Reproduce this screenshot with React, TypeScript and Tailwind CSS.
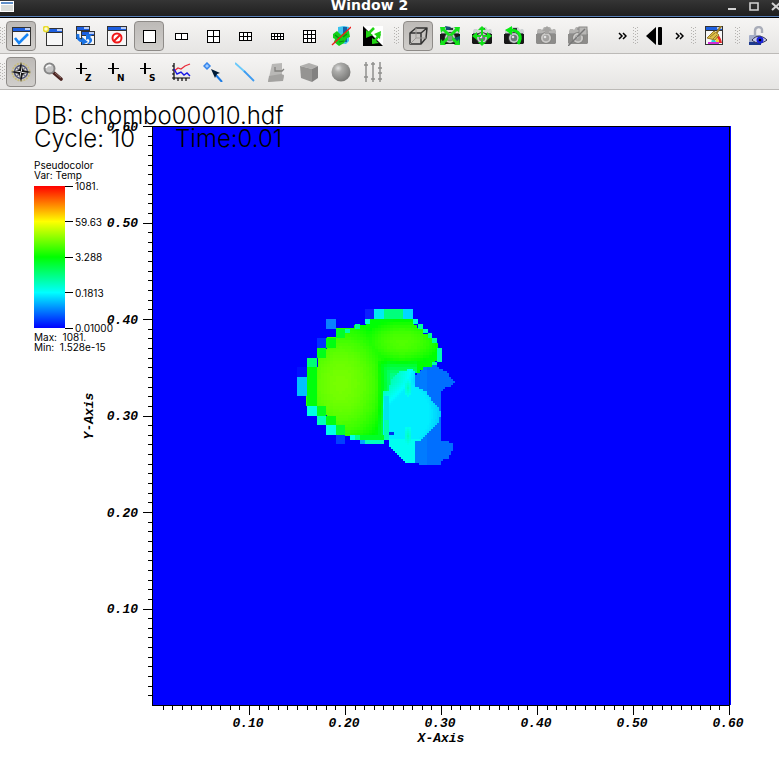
import React from "react";

type Point = [number, number];
type IconProps = { children: React.ReactNode };

const Glyph = ({ children }: IconProps) => (
  <svg viewBox="0 0 20 20" className="h-5 w-5" aria-hidden="true">
    {children}
  </svg>
);

const MiniWindow = ({ x = 0, y = 0, w = 18, h = 19 }) => (
  <g shapeRendering="crispEdges">
    <rect x={x} y={y} width={w} height={h} fill="#333" />
    <rect x={x + 1} y={y + 1} width={w - 2} height={3} fill="#1d5fe0" />
    <rect x={x + w - 6} y={y + 1} width={5} height={2} fill="#b9cdf5" />
    <rect x={x + 1} y={y + 5} width={w - 2} height={h - 6} fill="#f7f7f7" />
  </g>
);

const ActiveWindowIcon = () => (
  <Glyph>
    <MiniWindow x={1} y={1} w={19} h={19} />
    <path d="M4 12 L8 17 L17 8" fill="none" stroke="#1684f5" strokeWidth="2.6" />
  </Glyph>
);

const NewWindowIcon = () => (
  <Glyph>
    <MiniWindow x={3} y={2} w={17} h={18} />
    <circle cx="3" cy="3" r="2.6" fill="#fffbd0" stroke="#e8dc30" strokeWidth="1.6" />
  </Glyph>
);

const CloneWindowIcon = () => (
  <Glyph>
    <MiniWindow x={1} y={0} w={14} h={13} />
    <MiniWindow x={6} y={5} w={14} h={14} />
    <path d="M3 8 C2 12 4 15 8 15" fill="none" stroke="#1b74e4" strokeWidth="3" />
    <path d="M7 11l6 5-6 3z" fill="#1b74e4" />
    <path d="M14 18c4-2 4-5 1-7l2-2-6-1 0 6 2-1c2 1 2 3-1 5z" fill="#1b74e4" />
  </Glyph>
);

const DeleteWindowIcon = () => (
  <Glyph>
    <MiniWindow x={0} y={0} w={20} h={20} />
    <circle cx="10" cy="12" r="4.5" fill="#fff" stroke="#f01818" strokeWidth="2" />
    <path d="M7 15l6-6" stroke="#f01818" strokeWidth="2" />
  </Glyph>
);

type LayoutProps = { cols: number; rows: number; cell: number };

// Window layout glyph: a black lattice of cols x rows cells
const LayoutIcon = ({ cols, rows, cell }: LayoutProps) => {
  const w = cols * cell + 1;
  const h = rows * cell + 1;
  const x = Math.ceil((20 - w) / 2);
  const y = Math.round((20 - h) / 2);
  return (
    <Glyph>
      <g shapeRendering="crispEdges">
        <rect x={x} y={y} width={w} height={h} fill="#000" />
        {Array.from({ length: cols * rows }, (_, i) => (
          <rect
            key={i}
            x={x + 1 + (i % cols) * cell}
            y={y + 1 + Math.floor(i / cols) * cell}
            width={cell - 1}
            height={cell - 1}
            fill="#fff"
          />
        ))}
      </g>
    </Glyph>
  );
};

const ClearPlotsIcon = () => (
  <Glyph>
    <path d="M7 1l6-1 5 1v14l-3 3-8-1z" fill="#3cc4ee" />
    <path d="M12 1l4 0v15l-4 0z" fill="#1261a8" />
    <path d="M2 8l4-3 4 4 4-3 4-1 1 6-3 1-3 5-5 3-5-4 1-3-2-1z" fill="#12cf17" />
    <path d="M4 9l5 4M12 11l4-3M8 16l5-1" stroke="#0a8d10" strokeWidth="1.2" />
    <path d="M1 19L20 1" stroke="#ed1c1c" strokeWidth="1.4" />
  </Glyph>
);

const InvertIcon = () => (
  <Glyph>
    <rect width="20" height="20" fill="#fff" />
    <path d="M0 0L20 20H0z" fill="#000" />
    <path d="M11 2L5 8M10 17l7-9" stroke="#21d413" strokeWidth="2.6" />
    <path d="M3 4v8l7-3zM18 5l-7 3 6 5zM9 12v6l7-1z" fill="#21d413" />
  </Glyph>
);

const BoxIcon = () => (
  <Glyph>
    <g fill="none" stroke="#333" strokeWidth="1.5" strokeLinejoin="round">
      <path d="M2 7h11v11H2zM2 7l6-5h11l-6 5M19 2l-1 10-5 6" />
      <path d="M8 2v10h10M8 12l-6 6" stroke="#9b9996" strokeWidth="1" />
    </g>
  </Glyph>
);

type CameraProps = { children?: React.ReactNode; muted?: boolean };

const Camera = ({ children, muted = false }: CameraProps) => {
  const body = muted ? "#8d8c8a" : "#171717";
  const top = muted ? "#b5b4b2" : "#cdd2d3";
  return (
    <Glyph>
      <path d="M1 5l1-2h3l1 1 2-3h6l2 3 1-1h2l1 2v4H1z" fill={top} />
      <path d="M0 8h20v9l-1 1H1l-1-1z" fill={body} />
      <rect x="1" y="7" width="18" height="1" fill={muted ? "#999" : "#5e6668"} />
      <rect x="9" y="2" width="4" height="2" fill={muted ? "#999" : "#30383c"} />
      <circle cx="10" cy="12" r="6" fill={muted ? "#858482" : "#333"} />
      <circle cx="10" cy="12" r="5" fill={muted ? "#cccbc9" : "#c2c8ca"} />
      <circle cx="10" cy="12" r="3.2" fill={muted ? "#a3a2a0" : "#6e7779"} />
      <circle cx="9" cy="11" r="1.3" fill="#e2e2e2" />
      {children}
    </Glyph>
  );
};

const ResetViewIcon = () => (
  <Camera>
    <path d="M5 0l6 1-2 3-3 0z" fill="#164b78" />
    <path d="M14 12l6-2v8l-4 1z" fill="#0f5963" />
    <path d="M2 2l16 16M18 2L2 18" stroke="#14e31a" strokeWidth="3" />
    <path d="M0 1h6L1 7zM20 1h-6l5 6zM0 19h6l-5-6zM20 19h-6l5-6z" fill="#14e31a" />
    <circle cx="10" cy="12" r="2.4" fill="#7d9a82" />
  </Camera>
);

const RecenterViewIcon = () => (
  <Camera>
    <path
      d="M10 0l4 4h-3v5H9V4H6zM10 20l4-4h-3v-3H9v3H6zM0 10l5-4v3h4v2H5v3zM20 10l-5-4v3h-4v2h4v3z"
      fill="#12e018"
    />
  </Camera>
);

const UndoViewIcon = () => (
  <Camera>
    <path d="M6 4c9 0 13 6 8 14" fill="none" stroke="#08ec12" strokeWidth="3" />
    <path d="M1 4l7-4v9z" fill="#08ec12" />
  </Camera>
);

const SaveViewIcon = () => (
  <Camera muted>
    <path d="M6 5l5-5 5 5h-3v3H9V5z" fill="#a4a3a1" />
  </Camera>
);

const ChooseCenterIcon = () => (
  <Camera muted>
    <rect x="11" y="1" width="8" height="8" fill="#b8b7b5" stroke="#8a8987" />
    <path d="M0 20L17 3" stroke="#777" strokeWidth="1.4" />
  </Camera>
);

const StepBackIcon = () => (
  <Glyph>
    <path d="M1 10L11 1v18z" fill="#000" />
    <rect x="13" y="1" width="4" height="18" rx="1" fill="#000" />
  </Glyph>
);

const SweepIcon = () => (
  <Glyph>
    <MiniWindow x={1} y={0} w={18} h={19} />
    <path d="M9 8c5-1 8 3 9 9h-3c0-4-2-6-6-6z" fill="#e5292b" />
    <path d="M9 11c4 0 6 2 6 6h-3c0-3-1-4-3-4z" fill="#f3d42c" />
    <path d="M8 13c3 0 4 2 4 4H7z" fill="#25d8da" />
    <rect x="4" y="16" width="11" height="2" fill="#d02cd7" />
    <path d="M17 0l-5 8" stroke="#9b7b24" strokeWidth="2" />
    <path d="M10 5l5 4-4 5-8-2z" fill="#ddbf45" stroke="#98792b" />
    <path d="M6 11l5-4M9 13l4-4" stroke="#98792b" />
  </Glyph>
);

const LockIcon = () => (
  <Glyph>
    <path d="M7 9V5c0-5 7-5 7-1v3" fill="none" stroke="#a9adb9" strokeWidth="2.4" />
    <rect x="1" y="9" width="12" height="10" rx="1" fill="#a3acc8" />
    <path d="M1 16h12v3H1z" fill="#1d3a8e" />
    <path d="M4 14c4-5 10-5 15 0-5 4-11 4-15 0z" fill="#c9cdf0" stroke="#33334e" />
    <circle cx="12" cy="14" r="3.5" fill="#1c24dc" />
    <circle cx="12" cy="14" r="1.3" fill="#000" />
  </Glyph>
);

const NavigateIcon = () => (
  <Glyph>
    <circle cx="10" cy="10" r="8.6" fill="none" stroke="#c8bc7c" strokeWidth="1.8" strokeDasharray="2 1" />
    <circle cx="10" cy="10" r="6.5" fill="#e6e5e1" stroke="#4a4f70" strokeWidth="1.4" />
    <path d="M5 5l5 3 5-3-3 5 3 5-5-3-5 3 3-5z" fill="#6d6d7c" />
    <path d="M10 0l2 8 8 2-8 2-2 8-2-8-8-2 8-2z" fill="#161616" />
    <path d="M10 10V3l1 6zM10 10h7l-6 1zM10 10v7l-1-6zM10 10H3l6-1z" fill="#fff" />
  </Glyph>
);

const ZoomIcon = () => (
  <Glyph>
    <path d="M11 11l7 6" stroke="#4b2522" strokeWidth="3.6" strokeLinecap="round" />
    <path d="M12 11l6 5" stroke="#8f6b65" strokeWidth="1" />
    <circle cx="6.5" cy="6.5" r="5" fill="#c5c5c5" stroke="#858585" strokeWidth="2" />
    <path d="M3 6c1-3 4-3 5-2" fill="none" stroke="#f8f8f8" strokeWidth="1.6" />
  </Glyph>
);

const PickIcon = ({ letter }: { letter: string }) => (
  <Glyph>
    <path d="M5 1h2v11H5zM1 6h11v1H1z" fill="#000" shapeRendering="crispEdges" />
    <text x="10" y="19" className="font-['DejaVu_Sans'] text-[9px] font-bold">
      {letter}
    </text>
  </Glyph>
);

const LineoutIcon = () => (
  <Glyph>
    <path d="M3 1v17M1 16h18M1 4h2M1 8h2M1 12h2M7 16v3M11 16v3M15 16v3" stroke="#000" strokeWidth="1.2" />
    <path d="M3 9l4-3 3 1 4-3 5-2" fill="none" stroke="#e92b39" strokeWidth="1.3" />
    <path d="M3 7l3 5 4-2 3 3 3-2 3 3" fill="none" stroke="#1517e5" strokeWidth="1.4" />
  </Glyph>
);

const PointToolIcon = () => (
  <Glyph>
    <path d="M4 1l3 3-3 3-3-3z" fill="#9fcbff" stroke="#3585eb" strokeWidth="1.5" />
    <path d="M12 12l7 8" stroke="#1b7be5" strokeWidth="2" />
    <path d="M8 7l9 4-3 1-2 4z" fill="#001a35" />
  </Glyph>
);

const LineToolIcon = () => (
  <Glyph>
    <path d="M0 1L10 10" stroke="#69c9fb" strokeWidth="1.8" />
    <path d="M9 9L19 19" stroke="#3d9bf0" strokeWidth="1.8" />
  </Glyph>
);

const PlaneToolIcon = () => (
  <Glyph>
    <path d="M5 2l10-1v12l2 1-1 4-15 2 2-9z" fill="#b9b8b6" />
    <path d="M2 14l12-2 3 1-1 6-15 1z" fill="#a3a2a0" />
    <path d="M8 5v4h7l2-2" fill="none" stroke="#81807e" strokeWidth="1.3" />
  </Glyph>
);

const BoxToolIcon = () => (
  <Glyph>
    <path d="M1 4l9-3 9 3-6 3z" fill="#b0afad" />
    <path d="M1 4l12 3v13L2 16z" fill="#959492" />
    <path d="M13 7l6-3v12l-6 4z" fill="#828180" />
  </Glyph>
);

const SphereToolIcon = () => (
  <Glyph>
    <defs>
      <radialGradient id="sphere" cx="0.35" cy="0.3" r="0.7">
        <stop offset="0" stopColor="#e1e1e1" />
        <stop offset="0.3" stopColor="#acacaa" />
        <stop offset="1" stopColor="#7b7b79" />
      </radialGradient>
    </defs>
    <circle cx="10" cy="10" r="9.5" fill="url(#sphere)" />
  </Glyph>
);

const AxisToolIcon = () => (
  <Glyph>
    <path d="M3 0v20M10 0v20M17 0v20M1 3h4M1 15h4M8 2h4M8 17h4M15 6h4M15 11h4M15 17h4" stroke="#90908e" strokeWidth="1.5" />
  </Glyph>
);

type Tool = { name: string; icon: React.ReactNode; pressed?: boolean; disabled?: boolean };

const windowTools: Tool[] = [
  { name: "Set active window", icon: <ActiveWindowIcon />, pressed: true },
  { name: "New window", icon: <NewWindowIcon /> },
  { name: "Clone window", icon: <CloneWindowIcon /> },
  { name: "Delete window", icon: <DeleteWindowIcon /> },
  { name: "Layout 1x1", icon: <LayoutIcon cols={1} rows={1} cell={12} />, pressed: true },
  { name: "Layout 1x2", icon: <LayoutIcon cols={2} rows={1} cell={6} /> },
  { name: "Layout 2x2", icon: <LayoutIcon cols={2} rows={2} cell={6} /> },
  { name: "Layout 2x3", icon: <LayoutIcon cols={3} rows={2} cell={4} /> },
  { name: "Layout 2x4", icon: <LayoutIcon cols={4} rows={2} cell={3} /> },
  { name: "Layout 3x3", icon: <LayoutIcon cols={3} rows={3} cell={4} /> },
  { name: "Clear plots", icon: <ClearPlotsIcon /> },
  { name: "Invert background", icon: <InvertIcon /> },
];

const viewTools: Tool[] = [
  { name: "Perspective", icon: <BoxIcon />, pressed: true },
  { name: "Reset view", icon: <ResetViewIcon /> },
  { name: "Recenter view", icon: <RecenterViewIcon /> },
  { name: "Undo view", icon: <UndoViewIcon /> },
  { name: "Save view", icon: <SaveViewIcon />, disabled: true },
  { name: "Choose center", icon: <ChooseCenterIcon />, disabled: true },
];

const modeTools: Tool[] = [
  { name: "Navigate", icon: <NavigateIcon />, pressed: true },
  { name: "Zoom", icon: <ZoomIcon /> },
  { name: "Zone pick", icon: <PickIcon letter="Z" /> },
  { name: "Node pick", icon: <PickIcon letter="N" /> },
  { name: "Spreadsheet pick", icon: <PickIcon letter="S" /> },
  { name: "Lineout", icon: <LineoutIcon /> },
  { name: "Point tool", icon: <PointToolIcon /> },
  { name: "Line tool", icon: <LineToolIcon /> },
  { name: "Plane tool", icon: <PlaneToolIcon />, disabled: true },
  { name: "Box tool", icon: <BoxToolIcon />, disabled: true },
  { name: "Sphere tool", icon: <SphereToolIcon />, disabled: true },
  { name: "Axis restriction tool", icon: <AxisToolIcon />, disabled: true },
];

const animationTools: Tool[] = [{ name: "Previous frame", icon: <StepBackIcon /> }];
const clearTools: Tool[] = [{ name: "Clear window", icon: <SweepIcon /> }];
const lockTools: Tool[] = [{ name: "Lock view", icon: <LockIcon /> }];

const ToolGroup = ({ tools }: { tools: Tool[] }) => (
  <div className="flex shrink-0 gap-0.5">
    {tools.map((tool) => (
      <button
        key={tool.name}
        type="button"
        aria-label={tool.name}
        disabled={tool.disabled}
        className={
          tool.pressed
            ? "flex h-[30px] w-[30px] items-center justify-center rounded border border-[#8e8b88] bg-gradient-to-b from-[#bdbab7] to-[#d0cecb]"
            : "flex h-[30px] w-[30px] items-center justify-center rounded border border-transparent"
        }
      >
        {tool.icon}
      </button>
    ))}
  </div>
);

const Grip = () => (
  <svg viewBox="0 0 5 18" className="h-[18px] w-[5px] shrink-0" shapeRendering="crispEdges" aria-hidden="true">
    {[0, 3, 6, 9, 12, 15].map((y) => (
      <g key={y} fill="#b5b3b0">
        <rect x="0" y={y} width="1" height="1" />
        <rect x="2" y={y + 1} width="1" height="1" />
        <rect x="4" y={y} width="1" height="1" />
      </g>
    ))}
  </svg>
);

const MoreButton = () => (
  <button type="button" aria-label="More tools" className="flex h-[30px] w-[18px] shrink-0 items-center justify-center">
    <svg viewBox="0 0 9 8" className="h-2 w-[9px]" aria-hidden="true">
      <path d="M1 1l3 3-3 3M5 1l3 3-3 3" fill="none" stroke="#000" strokeWidth="1.5" />
    </svg>
  </button>
);

const TitleBar = () => (
  <header className="flex h-[18px] items-start justify-between overflow-hidden border-b border-black bg-gradient-to-b from-[#353535] to-[#1e1e1e] shadow-[inset_0_-1px_0_#5a80b8]">
    <svg viewBox="0 0 74 12" className="h-3 w-[74px]" shapeRendering="crispEdges" aria-hidden="true">
      <rect x="0" y="1" width="14" height="11" fill="#fff" />
      <rect x="1" y="2" width="12" height="2" fill="#5f8fc9" />
      <rect x="1" y="5" width="12" height="6" fill="#d9dcd9" />
    </svg>
    <h1 className="pr-14 font-['DejaVu_Sans'] text-sm leading-[11px] font-bold text-white">Window 2</h1>
    <div className="-mr-2 flex shrink-0 text-[#d2d2d2]">
      <button type="button" aria-label="Minimize" className="flex h-3 w-[22px] items-center justify-center">
        <svg viewBox="0 0 10 10" className="h-2.5 w-2.5" fill="none" stroke="currentColor" strokeWidth="2">
          <path d="M1 8h8" />
        </svg>
      </button>
      <button type="button" aria-label="Maximize" className="flex h-3 w-[22px] items-center justify-center">
        <svg viewBox="0 0 10 10" className="h-2.5 w-2.5" fill="none" stroke="currentColor" strokeWidth="1.6">
          <path d="M1 2h8v7H1z" />
        </svg>
      </button>
      <button type="button" aria-label="Close" className="flex h-3 w-[22px] items-center justify-center">
        <svg viewBox="0 0 10 10" className="h-2.5 w-2.5" fill="none" stroke="currentColor" strokeWidth="2">
          <path d="M1 2l8 7M9 2l-8 7" />
        </svg>
      </button>
    </div>
  </header>
);

function inside(poly: Point[], x: number, y: number) {
  let hit = false;
  for (let i = 0, j = poly.length - 1; i < poly.length; j = i++) {
    const [xi, yi] = poly[i];
    const [xj, yj] = poly[j];
    if (yi > y !== yj > y && x < ((xj - xi) * (y - yi)) / (yj - yi) + xi) hit = !hit;
  }
  return hit;
}

// Distance from a core, 0 in the middle and 1 on the rim
const reach = (x: number, y: number, cx: number, cy: number, rx: number, ry: number) =>
  Math.hypot((x - cx) / rx, (y - cy) / ry);

const hotHue = (x: number, y: number) => {
  const left = 92 + 20 * reach(x, y, 341, 384, 42, 56) ** 2;
  const cap = 101 + 16 * reach(x, y, 402, 342, 36, 20) ** 2;
  const rim = x < 416 ? 2 * Math.max(0, Math.min(x - 376, y - 360)) : 0;
  return Math.min(left, cap, 121) + rim;
};

const coldHue = (x: number, y: number) => {
  const spots = Math.min(reach(x, y, 408, 388, 4, 9), reach(x, y, 408, 436, 4, 10));
  if (spots < 1) return 164 + 14 * spots;
  if (y > 438) return 177;
  const corner = Math.min(28, Math.max(0, 795 - x - y));
  return 184 - corner + 30 * Math.max(0, reach(x, y, 399, 414, 40, 42) - 0.75);
};

const lobeHue = (x: number) => (x < 428 ? 211 : 214);

const hotArea: Point[] = [
  [374, 319], [413, 319], [413, 324], [418, 324], [418, 329], [423, 329], [423, 333], [428, 333],
  [428, 338], [432, 338], [432, 343], [437, 343], [437, 362], [432, 366], [424, 368], [417, 374],
  [402, 376], [391, 385], [386, 395], [384, 440], [360, 440], [360, 435], [345, 435], [336, 435],
  [336, 425], [326, 425], [326, 416], [317, 416], [317, 406], [307, 406], [307, 367], [317, 367],
  [317, 348], [326, 348], [326, 338], [336, 338], [336, 329], [355, 329], [355, 324], [365, 324],
  [365, 319],
];

const coldArea: Point[] = [
  [384, 391], [388, 391], [392, 380], [400, 372], [412, 369], [416, 373], [416, 386], [426, 391],
  [432, 400], [439, 407], [441, 415], [438, 423], [430, 431], [421, 440], [415, 442], [415, 463],
  [407, 463], [400, 457], [394, 451], [389, 447], [389, 440], [384, 440],
];

const lobes: Point[] = [
  [415, 375], [424, 367], [437, 365], [441, 369], [447, 371], [450, 376], [455, 382], [452, 386],
  [446, 388], [441, 392], [441, 440], [449, 442], [454, 445], [453, 450], [449, 458], [443, 460],
  [440, 465], [424, 465], [415, 463],
];

type Cell = { x: number; y: number; size: number; hue: number };

function cellsIn(poly: Point[], size: number, hueAt: (x: number, y: number) => number) {
  const cells: Cell[] = [];
  for (let y = 319; y < 466; y += size) {
    for (let x = 297; x < 457; x += size) {
      const cx = x + size / 2;
      const cy = y + size / 2;
      if (inside(poly, cx, cy)) cells.push({ x, y, size, hue: Math.round(hueAt(cx, cy)) });
    }
  }
  return cells;
}

const fieldCells = [
  ...cellsIn(lobes, 2, lobeHue),
  ...cellsIn(hotArea, 3, hotHue),
  ...cellsIn(coldArea, 2, coldHue),
];

// Coarse and rim patches: x, y, width, height, fill
const patches: [number, number, number, number, string][] = [
  [365, 309, 9, 10, "#0a1eff"],
  [374, 309, 10, 10, "#00ecf2"],
  [384, 309, 19, 10, "#00ff7c"],
  [403, 309, 10, 10, "#00d8ff"],
  [326, 319, 10, 10, "#0a80ff"],
  [317, 338, 9, 10, "#0030ff"],
  [307, 358, 10, 9, "#00ff74"],
  [317, 348, 9, 10, "#00ff18"],
  [326, 338, 10, 10, "#00ff10"],
  [336, 329, 9, 9, "#00ff28"],
  [345, 329, 5, 4, "#00ffa8"],
  [355, 324, 5, 5, "#00ff90"],
  [365, 319, 5, 5, "#00ffd0"],
  [297, 367, 10, 10, "#0010ff"],
  [297, 377, 10, 19, "#00c0ff"],
  [307, 367, 10, 39, "#00ff0c"],
  [307, 406, 10, 10, "#00ffe4"],
  [317, 406, 9, 10, "#00ff20"],
  [317, 416, 9, 9, "#00ffba"],
  [326, 416, 10, 9, "#00ff10"],
  [326, 425, 10, 10, "#00ffea"],
  [336, 425, 9, 10, "#00ff30"],
  [336, 435, 9, 9, "#0040ff"],
  [350, 435, 5, 5, "#00ffe8"],
  [355, 435, 5, 5, "#00ff90"],
  [360, 435, 24, 5, "#00ff28"],
  [360, 440, 5, 4, "#00a8ff"],
  [365, 440, 19, 4, "#00ffbe"],
  [413, 319, 5, 5, "#00ffd8"],
  [418, 324, 5, 5, "#00ff9c"],
  [423, 329, 5, 4, "#00ffb8"],
  [428, 333, 4, 5, "#00ff90"],
  [432, 338, 5, 5, "#00ffa0"],
  [437, 348, 5, 14, "#00ffb0"],
  [432, 362, 5, 3, "#00ffa0"],
  [384, 396, 5, 24, "#00e4ee"],
  [384, 420, 5, 20, "#00ffac"],
  [389, 432, 5, 3, "#0030f0"],
];

const labels = ["0.10", "0.20", "0.30", "0.40", "0.50", "0.60"];

const axisText = "font-['Liberation_Mono',monospace] text-[13px] font-bold italic";

const Plot = () => (
  <svg viewBox="0 90 779 676" className="block w-full" role="img" aria-label="Pseudocolor plot of Temp">
    <g shapeRendering="crispEdges">
      <rect x="153" y="126" width="578" height="579" fill="#0000ff" />
      {fieldCells.map((c, i) => (
        <rect key={i} x={c.x} y={c.y} width={c.size} height={c.size} fill={`hsl(${c.hue} 100% 50%)`} />
      ))}
      {patches.map(([x, y, w, h, fill]) => (
        <rect key={`${x}-${y}`} x={x} y={y} width={w} height={h} fill={fill} />
      ))}
      <g fill="#000">
        <rect x="152" y="126" width="1" height="580" />
        <rect x="152" y="705" width="578" height="1" />
        <rect x="143" y="126" width="587" height="1" />
        <rect x="729" y="126" width="1" height="580" />
        {Array.from({ length: 60 }, (_, i) => i + 1).map((n) => {
          const major = n % 10 === 0;
          const x = Math.round(153 + n * 9.6);
          const y = Math.round(705 - n * 9.65);
          return (
            <g key={n}>
              <rect x={x} y="706" width="1" height={major ? 9 : 4} />
              <rect x={major ? 143 : 148} y={y} width={major ? 9 : 4} height="1" />
            </g>
          );
        })}
      </g>
    </g>
    {labels.map((label, i) => (
      <g key={label} className={axisText}>
        <text x={248 + i * 96} y="727" textAnchor="middle">
          {label}
        </text>
        <text x="138" y={Math.round(613 - i * 96.4)} textAnchor="end">
          {label}
        </text>
      </g>
    ))}
    <text x="441" y="742" textAnchor="middle" className={axisText}>
      X-Axis
    </text>
    <text transform="translate(93 416) rotate(-90)" textAnchor="middle" className={axisText}>
      Y-Axis
    </text>
  </svg>
);

const legendValues = ["1081.", "59.63", "3.288", "0.1813", "0.01000"];

const Legend = () => (
  <div className="mt-2.5 text-[10px] leading-[10px]">
    <p>Pseudocolor</p>
    <p>Var: Temp</p>
    <div className="mt-1.5 flex">
      <div className="h-[142px] w-[31px] bg-[linear-gradient(to_bottom,#f00,#ff0,#0f0,#0ff,#00f)]" />
      <ul className="-my-[5px] flex flex-col justify-between">
        {legendValues.map((value) => (
          <li key={value} className="flex items-center gap-0.5">
            <span className="h-px w-2 bg-black" />
            {value}
          </li>
        ))}
      </ul>
    </div>
    <p className="mt-1 whitespace-pre">Max:  1081.</p>
    <p className="whitespace-pre">Min:  1.528e-15</p>
  </div>
);

const App = () => {
  const toolbar =
    "flex h-9 items-center overflow-hidden border-b border-[#bcbab7] bg-gradient-to-b from-[#f6f5f4] to-[#e6e5e3] pt-px";

  return (
    <div className="min-h-screen bg-white font-['Inter',sans-serif] text-black">
      <TitleBar />
      <div role="toolbar" aria-label="Window" className={toolbar}>
        <Grip />
        <div className="ml-px">
          <ToolGroup tools={windowTools} />
        </div>
        <div className="ml-1.5 flex items-center gap-1">
          <Grip />
          <ToolGroup tools={viewTools} />
        </div>
        <div className="ml-5 flex items-center gap-0.5">
          <MoreButton />
          <Grip />
          <ToolGroup tools={animationTools} />
        </div>
        <div className="flex items-center gap-[3px]">
          <MoreButton />
          <Grip />
          <ToolGroup tools={clearTools} />
        </div>
        <div className="ml-1.5 flex items-center gap-[3px]">
          <Grip />
          <ToolGroup tools={lockTools} />
          <MoreButton />
        </div>
      </div>
      <div role="toolbar" aria-label="Mode" className={toolbar}>
        <Grip />
        <div className="ml-px">
          <ToolGroup tools={modeTools} />
        </div>
      </div>
      <main className="relative">
        <Plot />
        <div className="absolute top-3.5 left-[34px]">
          <div className="text-2xl leading-[23px] font-light">
            <p>DB: chombo00010.hdf</p>
            <p className="flex gap-10">
              <span>Cycle: 10</span>
              <span>Time:0.01</span>
            </p>
          </div>
          <Legend />
        </div>
      </main>
    </div>
  );
};

export default App;
